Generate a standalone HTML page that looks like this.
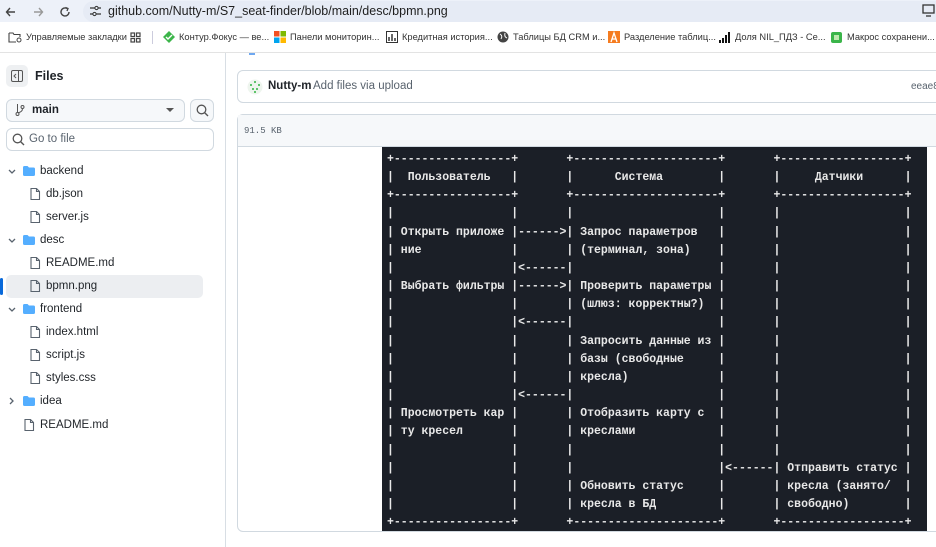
<!DOCTYPE html>
<html><head><meta charset="utf-8">
<style>
*{margin:0;padding:0;box-sizing:border-box}
body{width:936px;height:547px;overflow:hidden;background:#fff;font-family:"Liberation Sans","Noto Sans CJK SC",sans-serif;color:#1f2328;position:relative}
.abs{position:absolute}
#top{left:0;top:0;width:936px;height:22px;background:#edf1f9}
#url{left:108px;top:4px;font-size:12.5px;color:#1f1f1f}
#bm{left:0;top:22px;width:936px;height:31px;background:#fff;border-bottom:1px solid #e3e3e3}
.bk{position:absolute;top:32px;font-size:9.3px;color:#333;white-space:nowrap}
#side{left:0;top:53px;width:226px;height:494px;border-right:1px solid #d8dee4}
.tree{position:absolute;font-size:11.5px;color:#1f2328;white-space:nowrap}
pre{font-family:"Liberation Mono",monospace;font-size:11.5px;line-height:18.15px;color:#e8e8e8;font-weight:bold}
</style></head><body>
<div class="abs" id="top"></div>
<svg class="abs" style="left:5px;top:5px" width="80" height="14" viewBox="0 0 80 14"><path d="M10 7H2M5 3L1.5 7 5 11" stroke="#444" stroke-width="1.4" fill="none"/><path d="M29 7h8M34 3l3.5 4L34 11" stroke="#999" stroke-width="1.4" fill="none"/><path d="M62 3.5A4 4 0 1 0 64 7" stroke="#444" stroke-width="1.4" fill="none"/><path d="M60.5 2.5L63 3.5 62 6" stroke="#444" stroke-width="1.3" fill="none"/></svg>
<div class="abs" style="left:83px;top:1px;width:853px;height:21px;background:#e6ebf5;border-radius:11px 0 0 11px"></div>
<svg class="abs" style="left:89px;top:5px" width="13" height="12"><path d="M1 3h5M9 3h3M1 9h3M7 9h5" stroke="#333" stroke-width="1.3"/><circle cx="7.5" cy="3" r="1.6" fill="none" stroke="#333"/><circle cx="5.5" cy="9" r="1.6" fill="none" stroke="#333"/></svg>
<div class="abs" id="url">github.com/Nutty-m/S7_seat-finder/blob/main/desc/bpmn.png</div>
<svg class="abs" style="left:922px;top:4px" width="14" height="13"><rect x="1" y="1" width="11" height="8" fill="none" stroke="#333" stroke-width="1.3"/><path d="M4 12h5" stroke="#333" stroke-width="1.3"/></svg>
<div class="abs" id="bm"></div>
<svg class="abs" style="left:8px;top:31px" width="14" height="12"><path d="M1 2h4l1 1.5h6V6M1 2v9h7" stroke="#444" stroke-width="1.1" fill="none"/><circle cx="11" cy="9" r="2" fill="none" stroke="#444"/></svg>
<div class="bk" style="left:26px">Управляемые закладки</div>
<svg class="abs" style="left:130px;top:32px" width="11" height="11"><g fill="none" stroke="#444" stroke-width="1.2"><rect x="1" y="1" width="3.5" height="3.5"/><rect x="6.5" y="1" width="3.5" height="3.5"/><rect x="1" y="6.5" width="3.5" height="3.5"/><rect x="6.5" y="6.5" width="3.5" height="3.5"/></g></svg>
<div class="abs" style="left:152px;top:31px;width:1px;height:13px;background:#ccd"></div>
<svg class="abs" style="left:163px;top:31px" width="12" height="12"><path d="M6 0L12 6 6 12 0 6z" fill="#3cb54a"/><path d="M3 6l2 2 4-4" stroke="#fff" stroke-width="1.4" fill="none"/></svg>
<div class="bk" style="left:179px">Контур.Фокус — ве...</div>
<svg class="abs" style="left:274px;top:31px" width="12" height="12"><rect width="5.5" height="5.5" fill="#f25022"/><rect x="6.5" width="5.5" height="5.5" fill="#7fba00"/><rect y="6.5" width="5.5" height="5.5" fill="#00a4ef"/><rect x="6.5" y="6.5" width="5.5" height="5.5" fill="#ffb900"/></svg>
<div class="bk" style="left:290px">Панели мониторин...</div>
<svg class="abs" style="left:386px;top:31px" width="12" height="12"><rect x=".5" y=".5" width="11" height="11" fill="none" stroke="#333"/><path d="M3 10V6M6 10V3M9 10V7" stroke="#333" stroke-width="1.5"/></svg>
<div class="bk" style="left:402px">Кредитная история...</div>
<svg class="abs" style="left:497px;top:31px" width="12" height="12"><circle cx="6" cy="6" r="5.5" fill="#444"/><path d="M3 3q3 2 1 5M8 2q-1 4 2 5" stroke="#fff" stroke-width="1" fill="none"/></svg>
<div class="bk" style="left:513px">Таблицы БД CRM и...</div>
<svg class="abs" style="left:608px;top:31px" width="12" height="12"><rect width="12" height="12" fill="#f57c20"/><path d="M3 11L6 2 9 11M4 8h4" stroke="#fff" stroke-width="1.3" fill="none"/></svg>
<div class="bk" style="left:624px">Разделение таблиц...</div>
<svg class="abs" style="left:719px;top:31px" width="12" height="12"><path d="M1 12V9M4 12V7M7 12V4M10 12V1" stroke="#111" stroke-width="2"/></svg>
<div class="bk" style="left:735px">Доля NIL_ПДЗ - Се...</div>
<svg class="abs" style="left:831px;top:32px" width="11" height="11"><rect width="11" height="11" rx="2" fill="#3bb54a"/><rect x="3" y="3" width="5" height="5" fill="#bfe9b0"/></svg>
<div class="bk" style="left:847px">Макрос сохранени...</div>

<div class="abs" id="side"></div>
<div class="abs" style="left:6px;top:65px;width:22px;height:22px;background:#eef0f2;border-radius:5px"></div>
<svg class="abs" style="left:11px;top:70px" width="12" height="12"><rect x=".5" y=".5" width="11" height="11" rx="1.5" fill="none" stroke="#555"/><path d="M7.5 1v10M5 4L3 6l2 2" stroke="#555" fill="none"/></svg>
<div class="abs" style="left:35px;top:69px;font-size:12.5px;font-weight:bold">Files</div>
<div class="abs" style="left:6px;top:99px;width:179px;height:23px;border:1px solid #d1d9e0;border-radius:6px;background:#f6f8fa"></div>
<svg class="abs" style="left:15px;top:104px" width="10" height="12"><circle cx="2.5" cy="10" r="1.5" fill="none" stroke="#555"/><circle cx="7.5" cy="3" r="1.5" fill="none" stroke="#555"/><path d="M2.5 0v8.5M7.5 4.5Q7.5 8 3 8.7" stroke="#555" fill="none"/></svg>
<div class="abs" style="left:32px;top:104px;font-size:11.5px;font-weight:bold">main</div>
<svg class="abs" style="left:166px;top:108px" width="8" height="5"><path d="M0 0h8L4 4z" fill="#555"/></svg>
<div class="abs" style="left:190px;top:99px;width:24px;height:23px;border:1px solid #d1d9e0;border-radius:6px;background:#f6f8fa"></div>
<svg class="abs" style="left:196px;top:104px" width="13" height="13"><circle cx="5.5" cy="5.5" r="4.3" fill="none" stroke="#555" stroke-width="1.3"/><path d="M8.7 8.7L12 12" stroke="#555" stroke-width="1.4"/></svg>
<div class="abs" style="left:6px;top:128px;width:208px;height:23px;border:1px solid #d1d9e0;border-radius:6px"></div>
<svg class="abs" style="left:12px;top:133px" width="13" height="13"><circle cx="5.5" cy="5.5" r="4.3" fill="none" stroke="#555" stroke-width="1.3"/><path d="M8.7 8.7L12 12" stroke="#555" stroke-width="1.4"/></svg>
<div class="abs" style="left:29px;top:133px;font-size:11.5px;color:#59636e">Go to file</div>

<div class="abs" style="left:6px;top:275px;width:197px;height:23px;background:#eceef1;border-radius:5px"></div>
<div class="abs" style="left:0;top:278px;width:3px;height:17px;background:#0969da;border-radius:2px"></div>

<svg class="abs" style="left:0;top:160px" width="60" height="280">
<defs>
<g id="fo"><path d="M0 2.5Q0 1 1.5 1H4.5L6 2.5H10.5Q12 2.5 12 4V9.5Q12 11 10.5 11H1.5Q0 11 0 9.5Z" fill="#54aeff"/></g>
<g id="fi"><path d="M1 .5H6.5L9.5 3.5V11.5H1Z M6.5 .5V3.5H9.5" fill="none" stroke="#59636e" stroke-width="1.1"/></g>
<g id="dn"><path d="M0 0L3 3 6 0" fill="none" stroke="#59636e" stroke-width="1.3"/></g>
</defs>
<use href="#dn" x="9" y="10"/><use href="#fo" x="23" y="5"/>
<use href="#fi" x="30" y="28"/>
<use href="#fi" x="30" y="51"/>
<use href="#dn" x="9" y="79"/><use href="#fo" x="23" y="74"/>
<use href="#fi" x="30" y="97"/>
<use href="#fi" x="30" y="120"/>
<use href="#dn" x="9" y="148"/><use href="#fo" x="23" y="143"/>
<use href="#fi" x="30" y="166"/>
<use href="#fi" x="30" y="189"/>
<use href="#fi" x="30" y="212"/>
<path d="M10 238L13 241 10 244" fill="none" stroke="#59636e" stroke-width="1.3"/><use href="#fo" x="23" y="235"/>
<use href="#fi" x="24" y="259"/>
</svg>
<div class="tree" style="left:40px;top:165px">backend</div>
<div class="tree" style="left:46px;top:188px">db.json</div>
<div class="tree" style="left:46px;top:211px">server.js</div>
<div class="tree" style="left:40px;top:234px">desc</div>
<div class="tree" style="left:46px;top:257px">README.md</div>
<div class="tree" style="left:46px;top:280px">bpmn.png</div>
<div class="tree" style="left:40px;top:303px">frontend</div>
<div class="tree" style="left:46px;top:326px">index.html</div>
<div class="tree" style="left:46px;top:349px">script.js</div>
<div class="tree" style="left:46px;top:372px">styles.css</div>
<div class="tree" style="left:40px;top:395px">idea</div>
<div class="tree" style="left:40px;top:419px">README.md</div>

<div class="abs" style="left:249px;top:53px;width:6px;height:2px;background:#6fa8f0"></div>
<div class="abs" style="left:237px;top:70px;width:710px;height:33px;border:1px solid #d1d9e0;border-radius:6px"></div>
<svg class="abs" style="left:247px;top:79px" width="16" height="16"><circle cx="8" cy="8" r="7.5" fill="#eef5ee"/><g fill="#5ec46b"><rect x="7" y="2" width="2" height="2"/><rect x="3" y="5" width="2" height="2"/><rect x="11" y="5" width="2" height="2"/><rect x="5" y="9" width="2" height="2"/><rect x="9" y="9" width="2" height="2"/><rect x="7" y="12" width="2" height="2"/></g></svg>
<div class="abs" style="left:268px;top:80px;font-size:11.5px;font-weight:bold">Nutty-m</div>
<div class="abs" style="left:313px;top:80px;font-size:11.5px;color:#59636e">Add files via upload</div>
<div class="abs" style="left:911px;top:81px;font-size:10px;color:#59636e">eeae82</div>
<div class="abs" style="left:237px;top:114px;width:710px;height:418px;border:1px solid #d1d9e0;border-radius:6px 0 0 6px"></div>
<div class="abs" style="left:238px;top:115px;width:698px;height:32px;background:#f6f8fa;border-bottom:1px solid #d1d9e0"></div>
<div class="abs" style="left:244px;top:126px;font-family:'Liberation Mono',monospace;font-size:9px;color:#59636e">91.5 KB</div>

<div class="abs" style="left:382px;top:147px;width:545px;height:384px;background:#1b1f27"></div>
<pre class="abs" style="left:387px;top:151px">+-----------------+       +---------------------+       +------------------+
|  Пользователь   |       |      Система        |       |     Датчики      |
+-----------------+       +---------------------+       +------------------+
|                 |       |                     |       |                  |
| Открыть приложе |------>| Запрос параметров   |       |                  |
| ние             |       | (терминал, зона)    |       |                  |
|                 |<------|                     |       |                  |
| Выбрать фильтры |------>| Проверить параметры |       |                  |
|                 |       | (шлюз: корректны?)  |       |                  |
|                 |<------|                     |       |                  |
|                 |       | Запросить данные из |       |                  |
|                 |       | базы (свободные     |       |                  |
|                 |       | кресла)             |       |                  |
|                 |<------|                     |       |                  |
| Просмотреть кар |       | Отобразить карту с  |       |                  |
| ту кресел       |       | креслами            |       |                  |
|                 |       |                     |       |                  |
|                 |       |                     |<------| Отправить статус |
|                 |       | Обновить статус     |       | кресла (занято/  |
|                 |       | кресла в БД         |       | свободно)        |
+-----------------+       +---------------------+       +------------------+</pre>
</body></html>
